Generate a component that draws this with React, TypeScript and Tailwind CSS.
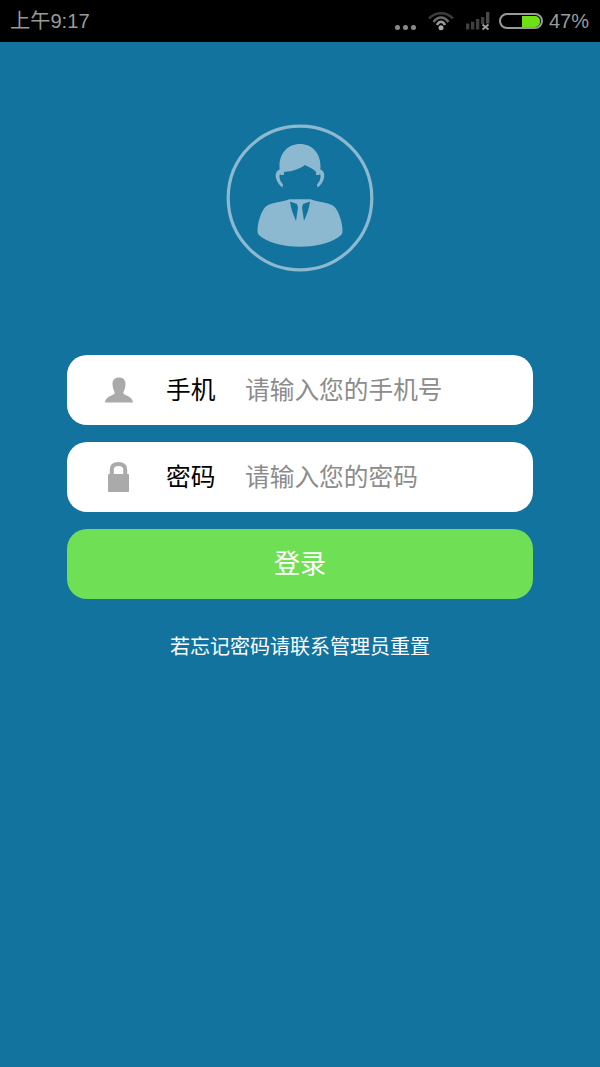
import type { ReactNode } from "react";

const fontStack = "font-['Liberation_Sans','Noto_Sans_CJK_SC',sans-serif]";

function StatusBar() {
  return (
    <div className="flex h-[42px] items-center justify-between bg-black pl-[10px] pr-[11px] text-[#9a9a9a]">
      <span className="text-[20.200px] leading-[42px]">上午9:17</span>
      <div className="flex items-center">
        <div className="mt-[12px] flex gap-[3px]">
          <i className="h-[5px] w-[5px] rounded-full bg-[#8a8a8a]" />
          <i className="h-[5px] w-[5px] rounded-full bg-[#8a8a8a]" />
          <i className="h-[5px] w-[5px] rounded-full bg-[#8a8a8a]" />
        </div>
        {/* wifi */}
        <svg className="ml-[12px]" width="26" height="22" viewBox="0 0 26 22" fill="none">
          <path d="M1 8.500C7.500 1.500 18.500 1.500 25 8.500" stroke="#3c3c3c" strokeWidth="2.500" />
          <path d="M5.500 12C10 6 16 6 20.500 12" stroke="#6a6a6a" strokeWidth="2.500" />
          <path d="M9 15C11 10.500 15 10.500 17 15" stroke="#999999" strokeWidth="2.500" />
          <circle cx="13" cy="17.700" r="2.500" fill="#aaaaaa" />
        </svg>
        {/* signal */}
        <svg className="ml-[12px]" width="24" height="20" viewBox="0 0 24 20">
          <rect x="0" y="12.500" width="3.300" height="6" fill="#3f3f3f" />
          <rect x="5" y="10.700" width="3.300" height="7.800" fill="#3f3f3f" />
          <rect x="10" y="8" width="3.300" height="10.500" fill="#3f3f3f" />
          <rect x="15" y="6" width="3.300" height="7" fill="#3f3f3f" />
          <rect x="20" y="1" width="3.300" height="11.500" fill="#4a4a4a" />
          <path d="M16.500 13.500L22.500 18.500M22.500 13.500L16.500 18.500" stroke="#a0a0a0" strokeWidth="1.800" />
        </svg>
        {/* battery */}
        <div className="ml-[9px] flex h-[16px] w-[44px] items-center justify-end rounded-full border-2 border-[#9a9a9a] pr-[1px]">
          <div className="h-[11px] w-[18px] rounded-r-[5px] bg-[#6ee014]" />
        </div>
        <span className="ml-[6px] text-[20px] leading-[42px]">47%</span>
      </div>
    </div>
  );
}

function Avatar() {
  return (
    <svg width="148" height="148" viewBox="0 0 148 148" className="block">
      <circle cx="74" cy="74" r="71.800" fill="none" stroke="#8db9d0" strokeWidth="3.200" />
      <g fill="#8db9d0">
        {/* hair */}
        <path d="M74 20C86 20 94.500 29 94.500 42C94.500 45 94.200 47.500 93.500 51L90 51C90.300 49.500 90.300 48.500 90 47.700C87 45 83 43 79 41C73 45 66 48 58.300 47.700C58 48.500 57.700 49.500 58 51L54.500 51C53.800 47.500 53.500 45 53.500 42C53.500 29 62 20 74 20Z" />
        {/* ears */}
        <path d="M54.500 45.500C50.500 46 49 50 50 54C51 58 53.500 61.500 56.500 63.500L57 60.500C55 58.500 53.500 55.500 53.500 52.500C53.500 50.500 54 49.500 55 49Z" />
        <path d="M93.500 45.500C97.500 46 99 50 98 54C97 58 94.500 61.500 91.500 63.500L91 60.500C93 58.500 94.500 55.500 94.500 52.500C94.500 50.500 94 49.500 93 49Z" />
        {/* shoulders, collar and tie */}
        <path
          fillRule="evenodd"
          d="M63.500 75.300C56 78 46 78.500 40.500 82C35.500 86 31.500 98 31.500 107C31.500 110 33 111.500 36 113.500C46 120 60 122.700 74 122.700C88 122.700 102 120 112 113.500C115 111.500 116.500 110 116.500 107C116.500 98 112.500 86 107.500 82C102 78.500 92 78 84.500 75.300ZM64 77.500L71 80L72 83.500L70 97C67.500 91 64.500 84 64 77.500ZM84 77.500L77 80L76 83.500L78 97C80.500 91 83.500 84 84 77.500Z"
        />
      </g>
    </svg>
  );
}

function UserGlyph() {
  return (
    <svg width="28" height="26" viewBox="0 0 28 26" fill="#aaaaaa">
      <path d="M14 0.500C18.500 0.500 20.500 3 20.500 7C20.500 10 19.500 13 18.500 15C18 16.500 18.500 17 20.500 18C24 19.500 27.500 21 28 25.500H0C0.500 21 4 19.500 7.500 18C9.500 17 10 16.500 9.500 15C8.500 13 7.500 10 7.500 7C7.500 3 9.500 0.500 14 0.500Z" />
    </svg>
  );
}

function LockGlyph() {
  return (
    <svg width="21" height="30" viewBox="0 0 21 30">
      <path d="M3.800 13V7.500C3.800 3.500 6.500 2 10.500 2C14.500 2 17.200 3.500 17.200 7.500V13" fill="none" stroke="#aaaaaa" strokeWidth="4" />
      <rect x="0" y="12" width="21" height="18" rx="1" fill="#aaaaaa" />
    </svg>
  );
}

function Field({ icon, label, hint }: { icon: ReactNode; label: string; hint: string }) {
  return (
    <div className="flex h-[70px] items-center rounded-[20px] bg-white">
      <div className="flex w-[99px] justify-center pl-[4px]">{icon}</div>
      <span className="mt-[3px] w-[79px] text-[24.700px] leading-none text-black">{label}</span>
      <span className="mt-[3px] text-[24.700px] leading-none text-[#8c8c8c]">{hint}</span>
    </div>
  );
}

export default function App() {
  return (
    <div className={`${fontStack} flex h-[1067px] w-[600px] flex-col overflow-hidden bg-[#12739f]`}>
      <StatusBar />
      <div className="flex justify-center pt-[82px]">
        <Avatar />
      </div>
      <div className="mt-[83px] flex flex-col gap-[17px] px-[67px]">
        <Field icon={<UserGlyph />} label="手机" hint="请输入您的手机号" />
        <Field icon={<LockGlyph />} label="密码" hint="请输入您的密码" />
        <button className="h-[70px] rounded-[20px] bg-[#6fe056] text-[26px] text-white">登录</button>
      </div>
      <p className="mt-[33px] text-center text-[20px] leading-[30px] text-white">若忘记密码请联系管理员重置</p>
    </div>
  );
}
